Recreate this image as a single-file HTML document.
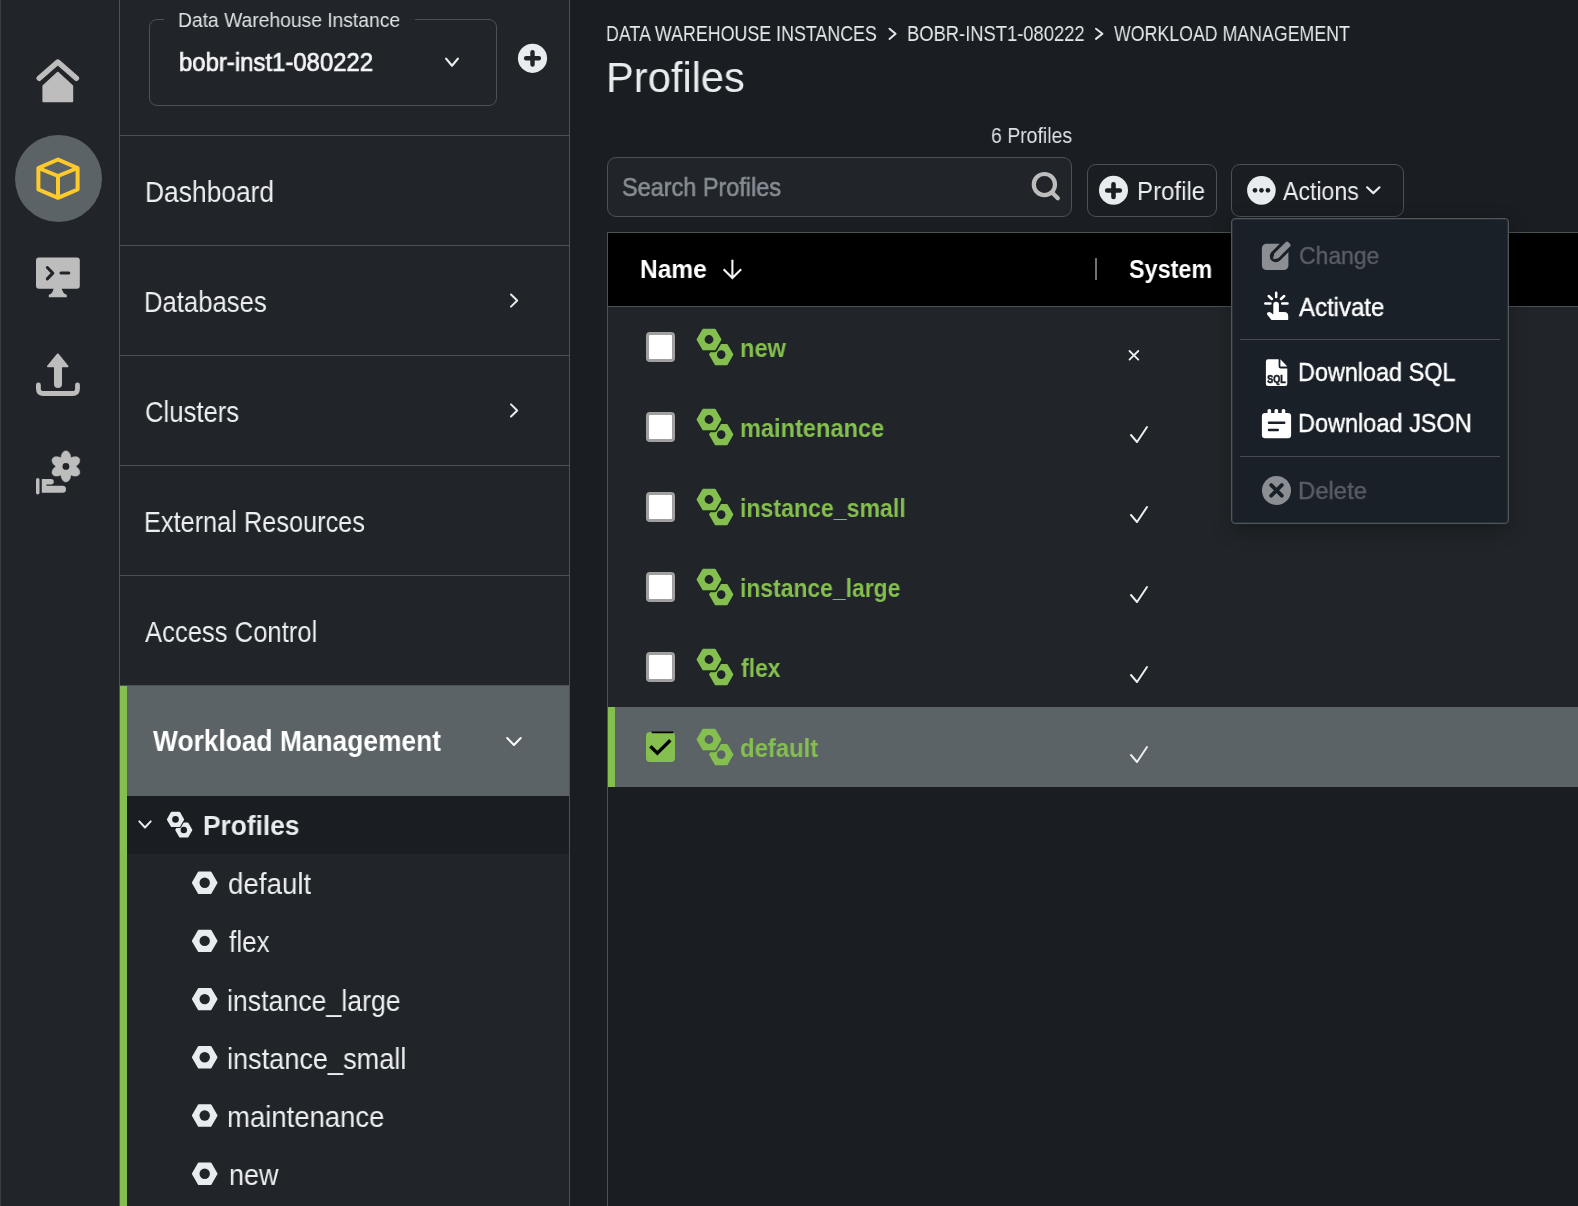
<!DOCTYPE html>
<html><head><meta charset="utf-8"><style>
html,body{margin:0;padding:0;width:1578px;height:1206px;overflow:hidden;background:#1b1d21;font-family:"Liberation Sans", sans-serif}
.r{position:absolute}
.t{position:absolute;white-space:nowrap;line-height:1;transform-origin:0 0;will-change:transform}
.s{position:absolute;overflow:visible}
</style></head><body>
<div class="r" style="left:0px;top:0px;width:120px;height:1206px;background:#212529;"></div>
<div class="r" style="left:0px;top:0px;width:1px;height:1206px;background:#3a3d41;"></div>
<div class="r" style="left:120px;top:0px;width:450px;height:1206px;background:#212529;"></div>
<div class="r" style="left:119px;top:0px;width:1px;height:1206px;background:#4a5256;"></div>
<div class="r" style="left:569px;top:0px;width:1px;height:1206px;background:#4a5256;"></div>
<div class="r" style="left:570px;top:0px;width:1008px;height:1206px;background:#1a1d21;"></div>
<div class="r" style="left:15px;top:135px;width:87px;height:87px;border-radius:50%;background:#5c6367"></div>
<svg class="s" style="left:0px;top:0px" width="1578" height="1206" viewBox="0 0 1578 1206"><path d="M39.2,78.3 L57.8,62 L76.4,78.3" fill="none" stroke="#bdbdbd" stroke-width="5.5" stroke-linecap="round" stroke-linejoin="round"/><path d="M43.4,86 L57.8,72.8 L72.2,86 L72.2,101.2 L43.4,101.2 Z" fill="#bdbdbd" stroke="#bdbdbd" stroke-width="2" stroke-linejoin="round"/><path d="M58,159.5 L77.6,168 L77.6,189.5 L58,197.8 L38.4,189.5 L38.4,168 Z M38.4,168 L58,176 L77.6,168 M58,176 L58,197.8" fill="none" stroke="#ffca2c" stroke-width="4" stroke-linejoin="round"/><rect x="36" y="257.4" width="43.8" height="31.4" rx="3" fill="#bdbdbd"/><path d="M47.3,267.5 L52.8,273.1 L47.3,278.9" fill="none" stroke="#212529" stroke-width="3" stroke-linecap="round" stroke-linejoin="round"/><path d="M61,273.1 L68.8,273.1" fill="none" stroke="#212529" stroke-width="3" stroke-linecap="round"/><path d="M53.7,288 L61.6,288 Q62.5,293.5 66.8,294.8 L66.8,297.2 L48.8,297.2 L48.8,294.8 Q53,293.5 53.7,288 Z" fill="#bdbdbd"/><path d="M57.8,354.5 L67.5,366.3 L48,366.3 Z" fill="#bdbdbd" stroke="#bdbdbd" stroke-width="2" stroke-linejoin="round"/><path d="M58,364 L58,384" fill="none" stroke="#bdbdbd" stroke-width="8" stroke-linecap="round"/><path d="M38.4,385 L38.4,388.5 Q38.4,393.5 43.4,393.5 L72.5,393.5 Q77.5,393.5 77.5,388.5 L77.5,385" fill="none" stroke="#bdbdbd" stroke-width="4.8" stroke-linecap="round"/><path d="M75.80,466.40 L76.02,466.58 L76.26,466.76 L76.51,466.96 L76.77,467.16 L77.02,467.37 L77.28,467.60 L77.52,467.83 L77.77,468.07 L78.00,468.32 L78.22,468.57 L78.44,468.84 L78.64,469.11 L78.82,469.38 L79.00,469.67 L79.16,469.95 L79.30,470.24 L79.43,470.54 L79.53,470.83 L79.62,471.13 L79.70,471.42 L79.75,471.72 L79.78,472.01 L79.79,472.30 L79.79,472.58 L79.76,472.86 L79.71,473.14 L79.64,473.40 L79.56,473.66 L79.45,473.91 L79.32,474.15 L79.18,474.38 L79.02,474.60 L78.84,474.80 L78.64,474.99 L78.43,475.17 L78.20,475.33 L77.95,475.48 L77.70,475.62 L77.43,475.73 L77.15,475.84 L76.85,475.92 L76.55,475.99 L76.24,476.05 L75.93,476.08 L75.60,476.10 L75.28,476.11 L74.95,476.10 L74.61,476.08 L74.28,476.04 L73.94,475.99 L73.61,475.92 L73.28,475.84 L72.95,475.75 L72.62,475.65 L72.30,475.55 L71.99,475.43 L71.69,475.31 L71.39,475.19 L71.11,475.07 L70.85,474.97 L70.81,475.25 L70.77,475.55 L70.72,475.87 L70.68,476.19 L70.62,476.52 L70.55,476.85 L70.48,477.18 L70.39,477.51 L70.29,477.84 L70.18,478.16 L70.06,478.47 L69.92,478.78 L69.78,479.09 L69.62,479.38 L69.45,479.66 L69.27,479.93 L69.08,480.18 L68.88,480.42 L68.67,480.65 L68.45,480.86 L68.22,481.05 L67.98,481.22 L67.74,481.38 L67.49,481.52 L67.23,481.63 L66.97,481.73 L66.71,481.80 L66.44,481.86 L66.17,481.89 L65.90,481.90 L65.63,481.89 L65.36,481.86 L65.09,481.80 L64.83,481.73 L64.57,481.63 L64.31,481.52 L64.06,481.38 L63.82,481.22 L63.58,481.05 L63.35,480.86 L63.13,480.65 L62.92,480.42 L62.72,480.18 L62.53,479.93 L62.35,479.66 L62.18,479.38 L62.02,479.09 L61.88,478.78 L61.74,478.47 L61.62,478.16 L61.51,477.84 L61.41,477.51 L61.32,477.18 L61.25,476.85 L61.18,476.52 L61.12,476.19 L61.08,475.87 L61.03,475.55 L60.99,475.25 L60.95,474.97 L60.69,475.07 L60.41,475.19 L60.11,475.31 L59.81,475.43 L59.50,475.55 L59.18,475.65 L58.85,475.75 L58.52,475.84 L58.19,475.92 L57.86,475.99 L57.52,476.04 L57.19,476.08 L56.85,476.10 L56.52,476.11 L56.20,476.10 L55.87,476.08 L55.56,476.05 L55.25,475.99 L54.95,475.92 L54.65,475.84 L54.37,475.73 L54.10,475.62 L53.85,475.48 L53.60,475.33 L53.37,475.17 L53.16,474.99 L52.96,474.80 L52.78,474.60 L52.62,474.38 L52.48,474.15 L52.35,473.91 L52.24,473.66 L52.16,473.40 L52.09,473.14 L52.04,472.86 L52.01,472.58 L52.01,472.30 L52.02,472.01 L52.05,471.72 L52.10,471.42 L52.18,471.13 L52.27,470.83 L52.37,470.54 L52.50,470.24 L52.64,469.95 L52.80,469.67 L52.98,469.38 L53.16,469.11 L53.36,468.84 L53.58,468.57 L53.80,468.32 L54.03,468.07 L54.28,467.83 L54.52,467.60 L54.78,467.37 L55.03,467.16 L55.29,466.96 L55.54,466.76 L55.78,466.58 L56.00,466.40 L55.78,466.22 L55.54,466.04 L55.29,465.84 L55.03,465.64 L54.78,465.43 L54.52,465.20 L54.28,464.97 L54.03,464.73 L53.80,464.48 L53.58,464.23 L53.36,463.96 L53.16,463.69 L52.98,463.42 L52.80,463.13 L52.64,462.85 L52.50,462.56 L52.37,462.26 L52.27,461.97 L52.18,461.67 L52.10,461.38 L52.05,461.08 L52.02,460.79 L52.01,460.50 L52.01,460.22 L52.04,459.94 L52.09,459.66 L52.16,459.40 L52.24,459.14 L52.35,458.89 L52.48,458.65 L52.62,458.42 L52.78,458.20 L52.96,458.00 L53.16,457.81 L53.37,457.63 L53.60,457.47 L53.85,457.32 L54.10,457.18 L54.37,457.07 L54.65,456.96 L54.95,456.88 L55.25,456.81 L55.56,456.75 L55.87,456.72 L56.20,456.70 L56.52,456.69 L56.85,456.70 L57.19,456.72 L57.52,456.76 L57.86,456.81 L58.19,456.88 L58.52,456.96 L58.85,457.05 L59.18,457.15 L59.50,457.25 L59.81,457.37 L60.11,457.49 L60.41,457.61 L60.69,457.73 L60.95,457.83 L60.99,457.55 L61.03,457.25 L61.08,456.93 L61.12,456.61 L61.18,456.28 L61.25,455.95 L61.32,455.62 L61.41,455.29 L61.51,454.96 L61.62,454.64 L61.74,454.33 L61.88,454.02 L62.02,453.71 L62.18,453.42 L62.35,453.14 L62.53,452.87 L62.72,452.62 L62.92,452.38 L63.13,452.15 L63.35,451.94 L63.58,451.75 L63.82,451.58 L64.06,451.42 L64.31,451.28 L64.57,451.17 L64.83,451.07 L65.09,451.00 L65.36,450.94 L65.63,450.91 L65.90,450.90 L66.17,450.91 L66.44,450.94 L66.71,451.00 L66.97,451.07 L67.23,451.17 L67.49,451.28 L67.74,451.42 L67.98,451.58 L68.22,451.75 L68.45,451.94 L68.67,452.15 L68.88,452.38 L69.08,452.62 L69.27,452.87 L69.45,453.14 L69.62,453.42 L69.78,453.71 L69.92,454.02 L70.06,454.33 L70.18,454.64 L70.29,454.96 L70.39,455.29 L70.48,455.62 L70.55,455.95 L70.62,456.28 L70.68,456.61 L70.72,456.93 L70.77,457.25 L70.81,457.55 L70.85,457.83 L71.11,457.73 L71.39,457.61 L71.69,457.49 L71.99,457.37 L72.30,457.25 L72.62,457.15 L72.95,457.05 L73.28,456.96 L73.61,456.88 L73.94,456.81 L74.28,456.76 L74.61,456.72 L74.95,456.70 L75.28,456.69 L75.60,456.70 L75.93,456.72 L76.24,456.75 L76.55,456.81 L76.85,456.88 L77.15,456.96 L77.43,457.07 L77.70,457.18 L77.95,457.32 L78.20,457.47 L78.43,457.63 L78.64,457.81 L78.84,458.00 L79.02,458.20 L79.18,458.42 L79.32,458.65 L79.45,458.89 L79.56,459.14 L79.64,459.40 L79.71,459.66 L79.76,459.94 L79.79,460.22 L79.79,460.50 L79.78,460.79 L79.75,461.08 L79.70,461.38 L79.62,461.67 L79.53,461.97 L79.43,462.26 L79.30,462.56 L79.16,462.85 L79.00,463.13 L78.82,463.42 L78.64,463.69 L78.44,463.96 L78.22,464.23 L78.00,464.48 L77.77,464.73 L77.52,464.97 L77.28,465.20 L77.02,465.43 L76.77,465.64 L76.51,465.84 L76.26,466.04 L76.02,466.22 Z" fill="#bdbdbd" stroke="#bdbdbd" stroke-width="0.6" stroke-linejoin="round"/><circle cx="65.9" cy="466.4" r="3.4" fill="#212529"/><rect x="36" y="478" width="3.5" height="16.6" rx="1.75" fill="#bdbdbd"/><path d="M41.8,478.9 H51 Q53.8,478.9 53.8,481.7 Q53.8,484.4 51,484.4 H46.5 V485.8 H62.8 Q66,485.8 66,489.3 Q66,492.8 62.8,492.8 H41.8 Z" fill="#bdbdbd"/></svg>
<div class="r" style="left:149px;top:19px;width:346px;height:85px;border:1.5px solid #4a5256;border-radius:8px;box-sizing:border-box;width:348px;height:87px"></div>
<div class="r" style="left:164px;top:10px;width:251px;height:20px;background:#212529;"></div>
<div class="t" style="left:177.80px;top:9.26px;font-size:21.08px;font-weight:normal;color:#dfe2e5;transform:scaleX(0.9142);">Data Warehouse Instance</div>
<div class="t" style="left:178.99px;top:50.06px;font-size:25.79px;font-weight:normal;color:#f4f5f6;transform:scaleX(0.9272);-webkit-text-stroke:0.7px #f4f5f6;">bobr-inst1-080222</div>
<div class="r" style="left:120px;top:135px;width:449px;height:1px;background:#4a5256;"></div>
<div class="r" style="left:120px;top:245px;width:449px;height:1px;background:#4a5256;"></div>
<div class="r" style="left:120px;top:355px;width:449px;height:1px;background:#4a5256;"></div>
<div class="r" style="left:120px;top:465px;width:449px;height:1px;background:#4a5256;"></div>
<div class="r" style="left:120px;top:575px;width:449px;height:1px;background:#4a5256;"></div>
<div class="r" style="left:120px;top:685px;width:449px;height:1px;background:#4a5256;"></div>
<div class="t" style="left:145.00px;top:176.55px;font-size:29.94px;font-weight:normal;color:#eceef0;transform:scaleX(0.8815);">Dashboard</div>
<div class="t" style="left:144.46px;top:286.55px;font-size:29.94px;font-weight:normal;color:#eceef0;transform:scaleX(0.8572);">Databases</div>
<div class="t" style="left:145.31px;top:396.55px;font-size:29.94px;font-weight:normal;color:#eceef0;transform:scaleX(0.8577);">Clusters</div>
<div class="t" style="left:144.49px;top:506.55px;font-size:29.94px;font-weight:normal;color:#eceef0;transform:scaleX(0.8457);">External Resources</div>
<div class="t" style="left:145.29px;top:616.55px;font-size:29.94px;font-weight:normal;color:#eceef0;transform:scaleX(0.8556);">Access Control</div>
<div class="r" style="left:120px;top:686px;width:449px;height:110px;background:#5c6367;"></div>
<div class="r" style="left:120px;top:686px;width:7px;height:520px;background:#84bf4f;"></div>
<div class="t" style="left:153.20px;top:726.89px;font-size:29.07px;font-weight:bold;color:#ffffff;transform:scaleX(0.9066);">Workload Management</div>
<div class="r" style="left:127px;top:796px;width:442px;height:58px;background:#1a1d21;"></div>
<div class="t" style="left:203.00px;top:812.81px;font-size:27.04px;font-weight:bold;color:#e9ecef;transform:scaleX(0.9737);">Profiles</div>
<div class="t" style="left:228.32px;top:869.29px;font-size:29.30px;font-weight:normal;color:#eceef0;transform:scaleX(0.9470);">default</div>
<div class="t" style="left:228.87px;top:927.49px;font-size:29.30px;font-weight:normal;color:#eceef0;transform:scaleX(0.8894);">flex</div>
<div class="t" style="left:227.38px;top:985.69px;font-size:29.30px;font-weight:normal;color:#eceef0;transform:scaleX(0.9112);">instance_large</div>
<div class="t" style="left:227.35px;top:1043.89px;font-size:29.30px;font-weight:normal;color:#eceef0;transform:scaleX(0.9256);">instance_small</div>
<div class="t" style="left:227.44px;top:1102.09px;font-size:29.30px;font-weight:normal;color:#eceef0;transform:scaleX(0.9381);">maintenance</div>
<div class="t" style="left:228.77px;top:1160.29px;font-size:29.30px;font-weight:normal;color:#eceef0;transform:scaleX(0.9214);">new</div>
<svg class="s" style="left:0px;top:0px" width="1578" height="1206" viewBox="0 0 1578 1206"><path d="M446.1,58.6 L452.0,65.7 L457.9,58.6" fill="none" stroke="#e9ecef" stroke-width="2.2" stroke-linecap="round" stroke-linejoin="round"/><circle cx="532.5" cy="58.3" r="14.6" fill="#e9ecef"/><path d="M532.5,52.1 V64.6 M526.1,58.3 H538.9" stroke="#212529" stroke-width="4.4" stroke-linecap="round"/><path d="M511.0,294.5 L517.2,300.55 L511.0,306.6" fill="none" stroke="#e9ecef" stroke-width="2" stroke-linecap="round" stroke-linejoin="round"/><path d="M511.0,404.4 L517.2,410.45 L511.0,416.5" fill="none" stroke="#e9ecef" stroke-width="2" stroke-linecap="round" stroke-linejoin="round"/><path d="M507.2,738.0 L513.95,745.0 L520.7,738.0" fill="none" stroke="#ffffff" stroke-width="2" stroke-linecap="round" stroke-linejoin="round"/><path d="M139.3,821.4 L145.0,827.5 L150.7,821.4" fill="none" stroke="#e9ecef" stroke-width="2" stroke-linecap="round" stroke-linejoin="round"/><path d="M191.30,830.00 L187.55,836.50 L180.05,836.50 L176.30,830.00 L180.05,823.50 L187.55,823.50 Z" fill="#e9ecef" stroke="#e9ecef" stroke-width="2" stroke-linejoin="round"/><path d="M183.10,819.40 L179.30,825.98 L171.70,825.98 L167.90,819.40 L171.70,812.82 L179.30,812.82 Z" fill="#e9ecef" stroke="#1a1d21" stroke-width="4.2" stroke-linejoin="round"/><path d="M183.10,819.40 L179.30,825.98 L171.70,825.98 L167.90,819.40 L171.70,812.82 L179.30,812.82 Z" fill="#e9ecef" stroke="#e9ecef" stroke-width="2" stroke-linejoin="round"/><circle cx="175.5" cy="819.4" r="3.3" fill="#1a1d21"/><circle cx="183.8" cy="830" r="3.2" fill="#1a1d21"/><path d="M216.50,882.70 L210.60,892.92 L198.80,892.92 L192.90,882.70 L198.80,872.48 L210.60,872.48 Z" fill="#e9ecef" stroke="#e9ecef" stroke-width="2" stroke-linejoin="round"/><circle cx="204.7" cy="882.7" r="5.2" fill="#212529"/><path d="M216.50,940.90 L210.60,951.12 L198.80,951.12 L192.90,940.90 L198.80,930.68 L210.60,930.68 Z" fill="#e9ecef" stroke="#e9ecef" stroke-width="2" stroke-linejoin="round"/><circle cx="204.7" cy="940.9000000000001" r="5.2" fill="#212529"/><path d="M216.50,999.10 L210.60,1009.32 L198.80,1009.32 L192.90,999.10 L198.80,988.88 L210.60,988.88 Z" fill="#e9ecef" stroke="#e9ecef" stroke-width="2" stroke-linejoin="round"/><circle cx="204.7" cy="999.1" r="5.2" fill="#212529"/><path d="M216.50,1057.30 L210.60,1067.52 L198.80,1067.52 L192.90,1057.30 L198.80,1047.08 L210.60,1047.08 Z" fill="#e9ecef" stroke="#e9ecef" stroke-width="2" stroke-linejoin="round"/><circle cx="204.7" cy="1057.3000000000002" r="5.2" fill="#212529"/><path d="M216.50,1115.50 L210.60,1125.72 L198.80,1125.72 L192.90,1115.50 L198.80,1105.28 L210.60,1105.28 Z" fill="#e9ecef" stroke="#e9ecef" stroke-width="2" stroke-linejoin="round"/><circle cx="204.7" cy="1115.5" r="5.2" fill="#212529"/><path d="M216.50,1173.70 L210.60,1183.92 L198.80,1183.92 L192.90,1173.70 L198.80,1163.48 L210.60,1163.48 Z" fill="#e9ecef" stroke="#e9ecef" stroke-width="2" stroke-linejoin="round"/><circle cx="204.7" cy="1173.7" r="5.2" fill="#212529"/></svg>
<div class="t" style="left:606.19px;top:22.69px;font-size:22.09px;font-weight:normal;color:#e4e7ea;transform:scaleX(0.8078);">DATA WAREHOUSE INSTANCES</div>
<div class="t" style="left:906.54px;top:22.69px;font-size:22.09px;font-weight:normal;color:#e4e7ea;transform:scaleX(0.8317);">BOBR-INST1-080222</div>
<div class="t" style="left:1113.90px;top:22.69px;font-size:22.09px;font-weight:normal;color:#e4e7ea;transform:scaleX(0.8044);">WORKLOAD MANAGEMENT</div>
<div class="t" style="left:606.22px;top:56.35px;font-size:43.17px;font-weight:normal;color:#e9ecef;transform:scaleX(0.9650);">Profiles</div>
<div class="t" style="left:991.05px;top:123.86px;font-size:22.97px;font-weight:normal;color:#dee2e6;transform:scaleX(0.8469);">6 Profiles</div>
<div class="r" style="left:607px;top:157px;width:465px;height:60px;border:1.5px solid #4a5256;border-radius:9px;box-sizing:border-box;background:#212529"></div>
<div class="t" style="left:621.68px;top:173.85px;font-size:26.16px;font-weight:normal;color:#868d94;transform:scaleX(0.8966);-webkit-text-stroke:0.6px #868d94;">Search Profiles</div>
<div class="r" style="left:1087px;top:164px;width:130px;height:53px;border:1.5px solid #4a5256;border-radius:9px;box-sizing:border-box"></div>
<div class="r" style="left:1231px;top:164px;width:173px;height:53px;border:1.5px solid #4a5256;border-radius:9px;box-sizing:border-box"></div>
<div class="t" style="left:1137.31px;top:178.72px;font-size:25.73px;font-weight:normal;color:#eceef0;transform:scaleX(0.9348);">Profile</div>
<div class="t" style="left:1283.49px;top:178.72px;font-size:25.73px;font-weight:normal;color:#eceef0;transform:scaleX(0.8982);">Actions</div>
<div class="r" style="left:607px;top:232px;width:971px;height:1px;background:#4a5256;"></div>
<div class="r" style="left:608px;top:233px;width:970px;height:73px;background:#000000;"></div>
<div class="r" style="left:607px;top:306px;width:971px;height:1px;background:#4a5256;"></div>
<div class="r" style="left:607px;top:232px;width:1px;height:974px;background:#4a5256;"></div>
<div class="r" style="left:608px;top:307px;width:970px;height:400px;background:#212529;"></div>
<div class="r" style="left:608px;top:707px;width:970px;height:80px;background:#5c6367;"></div>
<div class="r" style="left:608px;top:707px;width:7px;height:80px;background:#84bf4f;"></div>
<div class="t" style="left:640.14px;top:256.69px;font-size:25.87px;font-weight:bold;color:#ffffff;transform:scaleX(0.9488);">Name</div>
<div class="r" style="left:1095px;top:258px;width:2px;height:22px;background:#6c7176;"></div>
<div class="t" style="left:1129.32px;top:256.69px;font-size:25.87px;font-weight:bold;color:#ffffff;transform:scaleX(0.9049);">System</div>
<div class="r" style="left:646px;top:332px;width:29px;height:30px;border-radius:4px;background:#fff;border:3px solid #a0a0a0;box-sizing:border-box"></div>
<div class="t" style="left:739.71px;top:335.29px;font-size:26.00px;font-weight:bold;color:#84bf4f;transform:scaleX(0.9084);">new</div>
<div class="r" style="left:646px;top:412px;width:29px;height:30px;border-radius:4px;background:#fff;border:3px solid #a0a0a0;box-sizing:border-box"></div>
<div class="t" style="left:739.71px;top:415.29px;font-size:26.00px;font-weight:bold;color:#84bf4f;transform:scaleX(0.9068);">maintenance</div>
<div class="r" style="left:646px;top:492px;width:29px;height:30px;border-radius:4px;background:#fff;border:3px solid #a0a0a0;box-sizing:border-box"></div>
<div class="t" style="left:739.74px;top:495.29px;font-size:26.00px;font-weight:bold;color:#84bf4f;transform:scaleX(0.8886);">instance_small</div>
<div class="r" style="left:646px;top:572px;width:29px;height:30px;border-radius:4px;background:#fff;border:3px solid #a0a0a0;box-sizing:border-box"></div>
<div class="t" style="left:739.76px;top:575.29px;font-size:26.00px;font-weight:bold;color:#84bf4f;transform:scaleX(0.8802);">instance_large</div>
<div class="r" style="left:646px;top:652px;width:29px;height:30px;border-radius:4px;background:#fff;border:3px solid #a0a0a0;box-sizing:border-box"></div>
<div class="t" style="left:740.97px;top:655.29px;font-size:26.00px;font-weight:bold;color:#84bf4f;transform:scaleX(0.8814);">flex</div>
<div class="r" style="left:646px;top:732px;width:29px;height:30px;border-radius:4px;background:#84bf4f"></div>
<div class="t" style="left:740.38px;top:735.29px;font-size:26.00px;font-weight:bold;color:#84bf4f;transform:scaleX(0.9179);">default</div>
<svg class="s" style="left:0px;top:0px" width="1578" height="1206" viewBox="0 0 1578 1206"><path d="M889.5,28.7 L895.6,33.8 L889.5,38.9" fill="none" stroke="#e4e7ea" stroke-width="2" stroke-linecap="round" stroke-linejoin="round"/><path d="M1096.0,28.7 L1102.4,33.8 L1096.0,38.9" fill="none" stroke="#e4e7ea" stroke-width="2" stroke-linecap="round" stroke-linejoin="round"/><circle cx="1044.4" cy="184.6" r="10.6" fill="none" stroke="#bdbdbd" stroke-width="4.2"/><path d="M1052.3,192.8 L1057.8,198.2" stroke="#bdbdbd" stroke-width="4.3" stroke-linecap="round"/><circle cx="1113.5" cy="190.3" r="14.5" fill="#e9ecef"/><path d="M1113.5,184.3 V196.9 M1107.2,190.5 H1119.8" stroke="#1a1d21" stroke-width="4.6" stroke-linecap="round"/><circle cx="1261.4" cy="190.35" r="14.3" fill="#e9ecef"/><circle cx="1255.0" cy="190.35" r="2.3" fill="#1a1d21"/><circle cx="1261.45" cy="190.35" r="2.3" fill="#1a1d21"/><circle cx="1267.9" cy="190.35" r="2.3" fill="#1a1d21"/><path d="M1367.1,187.29999999999998 L1373.3,193.1 L1379.5,187.29999999999998" fill="none" stroke="#e9ecef" stroke-width="2.2" stroke-linecap="round" stroke-linejoin="round"/><path d="M732.4,259.7 V277.5 M723.6,269.3 L732.4,278 L741.2,269.3" fill="none" stroke="#f4f4f4" stroke-width="2.1"/><path d="M732.30,354.60 L726.75,364.21 L715.65,364.21 L710.10,354.60 L715.65,344.99 L726.75,344.99 Z" fill="#84bf4f" stroke="#84bf4f" stroke-width="2" stroke-linejoin="round"/><path d="M720.40,339.50 L714.70,349.37 L703.30,349.37 L697.60,339.50 L703.30,329.63 L714.70,329.63 Z" fill="#84bf4f" stroke="#212529" stroke-width="5.6" stroke-linejoin="round"/><path d="M720.40,339.50 L714.70,349.37 L703.30,349.37 L697.60,339.50 L703.30,329.63 L714.70,329.63 Z" fill="#84bf4f" stroke="#84bf4f" stroke-width="2" stroke-linejoin="round"/><circle cx="709" cy="339.5" r="4.4" fill="#212529"/><circle cx="721.2" cy="354.6" r="4.3" fill="#212529"/><path d="M1129.5,351 L1138.3,359.6 M1138.3,351 L1129.5,359.6" stroke="#eceef0" stroke-width="1.8" stroke-linecap="round"/><path d="M732.30,434.60 L726.75,444.21 L715.65,444.21 L710.10,434.60 L715.65,424.99 L726.75,424.99 Z" fill="#84bf4f" stroke="#84bf4f" stroke-width="2" stroke-linejoin="round"/><path d="M720.40,419.50 L714.70,429.37 L703.30,429.37 L697.60,419.50 L703.30,409.63 L714.70,409.63 Z" fill="#84bf4f" stroke="#212529" stroke-width="5.6" stroke-linejoin="round"/><path d="M720.40,419.50 L714.70,429.37 L703.30,429.37 L697.60,419.50 L703.30,409.63 L714.70,409.63 Z" fill="#84bf4f" stroke="#84bf4f" stroke-width="2" stroke-linejoin="round"/><circle cx="709" cy="419.5" r="4.4" fill="#212529"/><circle cx="721.2" cy="434.6" r="4.3" fill="#212529"/><path d="M1131,435 L1137,442 L1147,427" fill="none" stroke="#eceef0" stroke-width="2" stroke-linecap="round" stroke-linejoin="round"/><path d="M732.30,514.60 L726.75,524.21 L715.65,524.21 L710.10,514.60 L715.65,504.99 L726.75,504.99 Z" fill="#84bf4f" stroke="#84bf4f" stroke-width="2" stroke-linejoin="round"/><path d="M720.40,499.50 L714.70,509.37 L703.30,509.37 L697.60,499.50 L703.30,489.63 L714.70,489.63 Z" fill="#84bf4f" stroke="#212529" stroke-width="5.6" stroke-linejoin="round"/><path d="M720.40,499.50 L714.70,509.37 L703.30,509.37 L697.60,499.50 L703.30,489.63 L714.70,489.63 Z" fill="#84bf4f" stroke="#84bf4f" stroke-width="2" stroke-linejoin="round"/><circle cx="709" cy="499.5" r="4.4" fill="#212529"/><circle cx="721.2" cy="514.6" r="4.3" fill="#212529"/><path d="M1131,515 L1137,522 L1147,507" fill="none" stroke="#eceef0" stroke-width="2" stroke-linecap="round" stroke-linejoin="round"/><path d="M732.30,594.60 L726.75,604.21 L715.65,604.21 L710.10,594.60 L715.65,584.99 L726.75,584.99 Z" fill="#84bf4f" stroke="#84bf4f" stroke-width="2" stroke-linejoin="round"/><path d="M720.40,579.50 L714.70,589.37 L703.30,589.37 L697.60,579.50 L703.30,569.63 L714.70,569.63 Z" fill="#84bf4f" stroke="#212529" stroke-width="5.6" stroke-linejoin="round"/><path d="M720.40,579.50 L714.70,589.37 L703.30,589.37 L697.60,579.50 L703.30,569.63 L714.70,569.63 Z" fill="#84bf4f" stroke="#84bf4f" stroke-width="2" stroke-linejoin="round"/><circle cx="709" cy="579.5" r="4.4" fill="#212529"/><circle cx="721.2" cy="594.6" r="4.3" fill="#212529"/><path d="M1131,595 L1137,602 L1147,587" fill="none" stroke="#eceef0" stroke-width="2" stroke-linecap="round" stroke-linejoin="round"/><path d="M732.30,674.60 L726.75,684.21 L715.65,684.21 L710.10,674.60 L715.65,664.99 L726.75,664.99 Z" fill="#84bf4f" stroke="#84bf4f" stroke-width="2" stroke-linejoin="round"/><path d="M720.40,659.50 L714.70,669.37 L703.30,669.37 L697.60,659.50 L703.30,649.63 L714.70,649.63 Z" fill="#84bf4f" stroke="#212529" stroke-width="5.6" stroke-linejoin="round"/><path d="M720.40,659.50 L714.70,669.37 L703.30,669.37 L697.60,659.50 L703.30,649.63 L714.70,649.63 Z" fill="#84bf4f" stroke="#84bf4f" stroke-width="2" stroke-linejoin="round"/><circle cx="709" cy="659.5" r="4.4" fill="#212529"/><circle cx="721.2" cy="674.6" r="4.3" fill="#212529"/><path d="M1131,675 L1137,682 L1147,667" fill="none" stroke="#eceef0" stroke-width="2" stroke-linecap="round" stroke-linejoin="round"/><path d="M650.4,746.3 L657.3,753.1 L670.3,740.2" fill="none" stroke="#000" stroke-width="3.4"/><rect x="651.5" y="731.6" width="22" height="1.6" rx="0.8" fill="#000"/><path d="M732.30,754.60 L726.75,764.21 L715.65,764.21 L710.10,754.60 L715.65,744.99 L726.75,744.99 Z" fill="#84bf4f" stroke="#84bf4f" stroke-width="2" stroke-linejoin="round"/><path d="M720.40,739.50 L714.70,749.37 L703.30,749.37 L697.60,739.50 L703.30,729.63 L714.70,729.63 Z" fill="#84bf4f" stroke="#5c6367" stroke-width="5.6" stroke-linejoin="round"/><path d="M720.40,739.50 L714.70,749.37 L703.30,749.37 L697.60,739.50 L703.30,729.63 L714.70,729.63 Z" fill="#84bf4f" stroke="#84bf4f" stroke-width="2" stroke-linejoin="round"/><circle cx="709" cy="739.5" r="4.4" fill="#5c6367"/><circle cx="721.2" cy="754.6" r="4.3" fill="#5c6367"/><path d="M1131,755 L1137,762 L1147,747" fill="none" stroke="#eceef0" stroke-width="2" stroke-linecap="round" stroke-linejoin="round"/></svg>
<div class="r" style="left:1231px;top:218px;width:278px;height:306px;border:1.5px solid #50575b;border-radius:4px;box-sizing:border-box;background:#1a2028;box-shadow:0 6px 20px rgba(0,0,0,0.3), inset 0 0 0 1px #2a3035"></div>
<div class="r" style="left:1240px;top:339px;width:260px;height:1px;background:#454b50;"></div>
<div class="r" style="left:1240px;top:456px;width:260px;height:1px;background:#454b50;"></div>
<div class="t" style="left:1298.63px;top:244.40px;font-size:24.56px;font-weight:normal;color:#5a5f64;transform:scaleX(0.9345);-webkit-text-stroke:0.4px #5a5f64;">Change</div>
<div class="t" style="left:1298.80px;top:294.83px;font-size:25.00px;font-weight:normal;color:#ffffff;transform:scaleX(0.9595);-webkit-text-stroke:0.4px #ffffff;">Activate</div>
<div class="t" style="left:1297.88px;top:360.09px;font-size:25.87px;font-weight:normal;color:#ffffff;transform:scaleX(0.9053);-webkit-text-stroke:0.4px #ffffff;">Download SQL</div>
<div class="t" style="left:1297.87px;top:410.89px;font-size:25.87px;font-weight:normal;color:#ffffff;transform:scaleX(0.9090);-webkit-text-stroke:0.4px #ffffff;">Download JSON</div>
<div class="t" style="left:1297.85px;top:479.42px;font-size:24.42px;font-weight:normal;color:#5a5f64;transform:scaleX(0.9766);-webkit-text-stroke:0.4px #5a5f64;">Delete</div>
<svg class="s" style="left:0px;top:0px" width="1578" height="1206" viewBox="0 0 1578 1206"><rect x="1261.9" y="243.8" width="26.5" height="26.3" rx="4.5" fill="#8b8e92"/><path d="M1275.8,256.3 L1288,244.1" stroke="#1a2028" stroke-width="12" stroke-linecap="round"/><path d="M1273.3,258.9 L1274.3,253.6 L1285.6,242.3 Q1287,240.9 1288.4,242.3 L1289.9,243.8 Q1291.3,245.2 1289.9,246.6 L1278.6,257.9 Z" fill="#8b8e92"/><path d="M1273.3,258.9 L1274.3,253.6 L1278.6,257.9 Z" fill="#8b8e92"/><path d="M1276.2,292.8 V297 M1265.3,303.5 H1270.4 M1282.2,303.5 H1287.5 M1268.7,296 L1271.9,299 M1284.2,296 L1281,299" stroke="#fff" stroke-width="2.5" stroke-linecap="round"/><path d="M1273.3,304.6 Q1273.3,301.8 1276.1,301.8 Q1278.9,301.8 1278.9,304.6 V311.9 H1284 Q1288.2,311.9 1288.2,316 V320 H1271.5 L1267.3,314.8 Q1266.3,313.2 1268,312.3 Q1269.5,311.6 1270.8,312.6 L1273.3,314.5 Z" fill="#fff"/><path d="M1268,359.3 H1278.6 V366.4 Q1278.6,368.4 1280.6,368.4 H1287.3 V384 Q1287.3,386.1 1285.2,386.1 H1268 Q1265.9,386.1 1265.9,384 V361.4 Q1265.9,359.3 1268,359.3 Z" fill="#fff"/><path d="M1280.4,359.3 L1287.3,366.4 H1280.4 Z" fill="#fff"/><text x="1276.5" y="382.6" font-family="Liberation Sans" font-weight="700" font-size="10.3" text-anchor="middle" fill="#1a2028" stroke="#1a2028" stroke-width="0.6" textLength="18.4" lengthAdjust="spacingAndGlyphs">SQL</text><rect x="1261.9" y="413" width="29.2" height="25.3" rx="3.2" fill="#fff"/><rect x="1267.5" y="409.1" width="3.6" height="7" rx="1.5" fill="#fff"/><rect x="1274.5" y="409.1" width="3.6" height="7" rx="1.5" fill="#fff"/><rect x="1281.7" y="409.1" width="3.6" height="7" rx="1.5" fill="#fff"/><rect x="1267.9" y="421.5" width="17.4" height="2.6" rx="0.8" fill="#1a2028"/><rect x="1267.9" y="428.7" width="11" height="2.6" rx="0.8" fill="#1a2028"/><circle cx="1276.5" cy="490.4" r="14.5" fill="#8b8e92"/><path d="M1271.2,485.1 L1281.8,495.7 M1281.8,485.1 L1271.2,495.7" stroke="#1a2028" stroke-width="3.8" stroke-linecap="round"/></svg>
</body></html>
